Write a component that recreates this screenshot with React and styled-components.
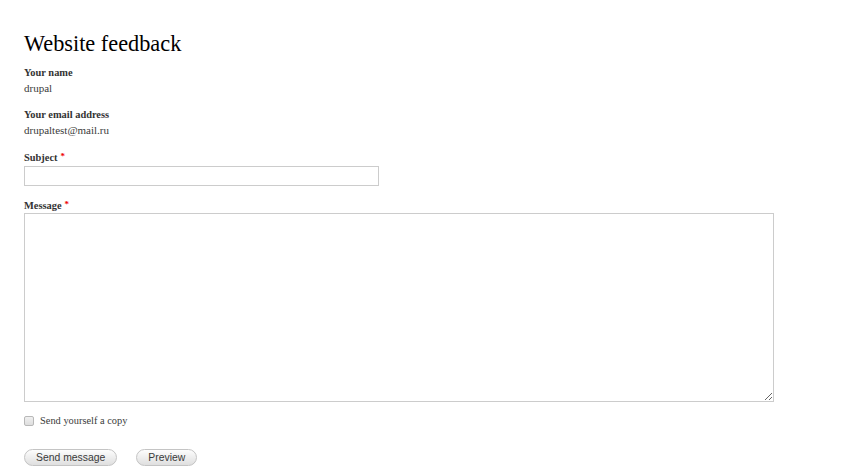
import React from "react";
import styled, { createGlobalStyle } from "styled-components";

const Global = createGlobalStyle`
  html, body { margin: 0; padding: 0; background: #fff; }
  body { font-family: "Liberation Serif", "Times New Roman", serif; color: #3b3b3b; }
`;

const Page = styled.div`
  padding: 29px 24px 0 24px;
  display: flex;
  flex-direction: column;
`;

const Title = styled.h1`
  margin: 0 0 7px 0;
  font-size: 22.3px;
  line-height: 29px;
  font-weight: normal;
  color: #000;
`;

const Field = styled.div`
  display: flex;
  flex-direction: column;
  margin-bottom: ${(p) => p.$gap || 10}px;
`;

const Label = styled.label`
  font-size: 10.4px;
  line-height: 16px;
  font-weight: bold;
  color: #333;
`;

const Required = styled.span`
  color: #e00;
  font-size: 9px;
  margin-left: 3px;
  vertical-align: top;
  line-height: 12px;
`;

const Value = styled.div`
  font-size: 11px;
  line-height: 14px;
  color: #3b3b3b;
`;

const TextInput = styled.input`
  box-sizing: border-box;
  width: 355px;
  height: 20px;
  margin: 0;
  border: 1px solid #ccc;
  padding: 2px 4px;
  font-family: inherit;
  font-size: 12px;
  outline: none;
`;

const TextArea = styled.textarea`
  box-sizing: border-box;
  width: 750px;
  height: 189px;
  margin: -1px 0 0 0;
  border: 1px solid #ccc;
  padding: 4px;
  font-family: inherit;
  font-size: 12px;
  resize: both;
  outline: none;
`;

const CheckRow = styled.label`
  display: flex;
  align-items: center;
  gap: 6px;
  font-size: 10.4px;
  line-height: 16px;
  color: #3b3b3b;
  margin-bottom: 20px;
`;

const Check = styled.input`
  appearance: none;
  box-sizing: border-box;
  margin: 0 0 1px 0;
  width: 10px;
  height: 10px;
  border: 1px solid #b8b8b8;
  border-radius: 2px;
  background: linear-gradient(#f0f0f0, #dedede);
`;

const Actions = styled.div`
  display: flex;
  gap: 19px;
`;

const Button = styled.button`
  font-family: "Liberation Sans", Arial, sans-serif;
  font-size: 10.4px;
  line-height: 13px;
  color: #3a3a3a;
  padding: 1px 11px;
  border: 1px solid #c4c4c4;
  border-radius: 20px;
  background: linear-gradient(#fdfdfd, #dfdfdf);
  cursor: pointer;
`;

export default function App() {
  return (
    <>
      <Global />
      <Page>
        <Title>Website feedback</Title>
        <Field $gap={12}>
          <Label>Your name</Label>
          <Value>drupal</Value>
        </Field>
        <Field $gap={13}>
          <Label>Your email address</Label>
          <Value>drupaltest@mail.ru</Value>
        </Field>
        <Field $gap={12}>
          <Label htmlFor="subject">
            Subject<Required>*</Required>
          </Label>
          <TextInput id="subject" type="text" />
        </Field>
        <Field $gap={11}>
          <Label htmlFor="message">
            Message<Required>*</Required>
          </Label>
          <TextArea id="message" />
        </Field>
        <CheckRow>
          <Check type="checkbox" />
          Send yourself a copy
        </CheckRow>
        <Actions>
          <Button>Send message</Button>
          <Button>Preview</Button>
        </Actions>
      </Page>
    </>
  );
}
